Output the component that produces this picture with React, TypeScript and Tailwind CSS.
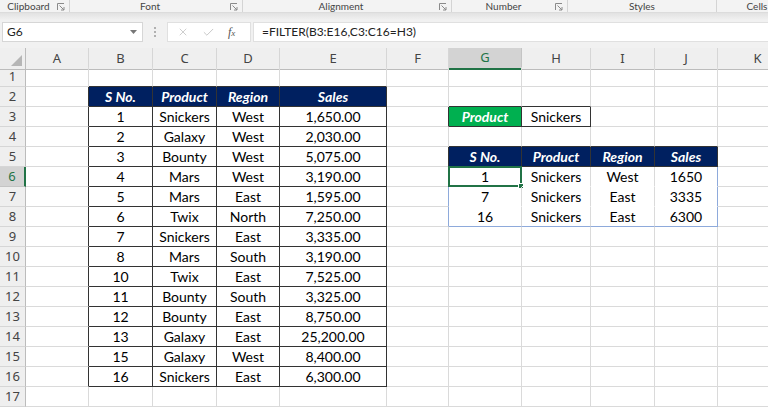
import React from 'react'
import { X, Check } from 'lucide-react'

type Edge = 'grid' | 'dark' | 'blue' | 'none'

const RIGHT: Record<Edge, string> = {
  grid: 'border-r-[#dadada]',
  dark: 'border-r-[#333333]',
  blue: 'border-r-[#8eaadb]',
  none: 'border-r-white',
}
const BOTTOM: Record<Edge, string> = {
  grid: 'border-b-[#dadada]',
  dark: 'border-b-[#333333]',
  blue: 'border-b-[#8eaadb]',
  none: 'border-b-white',
}

const COLS = ['A', 'B', 'C', 'D', 'E', 'F', 'G', 'H', 'I', 'J', 'K']
const TEMPLATE = 'grid grid-cols-[26px_63px_64px_64px_63px_107px_62px_73px_69px_64px_63px_80px]'

const HEAD = ['S No.', 'Product', 'Region', 'Sales']
const SALES = [
  ['1', 'Snickers', 'West', '1,650.00'],
  ['2', 'Galaxy', 'West', '2,030.00'],
  ['3', 'Bounty', 'West', '5,075.00'],
  ['4', 'Mars', 'West', '3,190.00'],
  ['5', 'Mars', 'East', '1,595.00'],
  ['6', 'Twix', 'North', '7,250.00'],
  ['7', 'Snickers', 'East', '3,335.00'],
  ['8', 'Mars', 'South', '3,190.00'],
  ['10', 'Twix', 'East', '7,525.00'],
  ['11', 'Bounty', 'South', '3,325.00'],
  ['12', 'Bounty', 'East', '8,750.00'],
  ['13', 'Galaxy', 'East', '25,200.00'],
  ['15', 'Galaxy', 'West', '8,400.00'],
  ['16', 'Snickers', 'East', '6,300.00'],
]
const FILTERED = [
  ['1', 'Snickers', 'West', '1650'],
  ['7', 'Snickers', 'East', '3335'],
  ['16', 'Snickers', 'East', '6300'],
]

function cellInfo(c: number, r: number) {
  let right: Edge = 'grid'
  let bottom: Edge = 'grid'
  let bg = ''
  let text = ''
  let head = false

  // source table B2:E16
  if (c >= 2 && c <= 5 && r >= 2 && r <= 16) {
    right = 'dark'
    bottom = 'dark'
    if (r === 2) {
      bg = 'bg-[#002060]'
      head = true
      text = HEAD[c - 2]
    } else {
      text = SALES[r - 3][c - 2]
    }
  }
  if (c === 1 && r >= 2 && r <= 16) right = 'dark'
  if (r === 1 && c >= 2 && c <= 5) bottom = 'dark'

  // criteria G3:H3
  if (r === 2 && (c === 7 || c === 8)) bottom = 'dark'
  if (r === 3 && c === 6) right = 'dark'
  if (r === 3 && c === 7) {
    right = 'dark'
    bottom = 'dark'
    bg = 'bg-[#00b050]'
    head = true
    text = 'Product'
  }
  if (r === 3 && c === 8) {
    right = 'dark'
    bottom = 'dark'
    text = 'Snickers'
  }

  // result header G5:J5
  if (r === 4 && c >= 7 && c <= 10) bottom = 'dark'
  if (r === 5 && c === 6) right = 'dark'
  if (r === 5 && c >= 7 && c <= 10) {
    right = 'dark'
    bottom = 'dark'
    bg = 'bg-[#002060]'
    head = true
    text = HEAD[c - 7]
  }

  // spill range G6:J8
  if (r >= 6 && r <= 8 && c === 6) right = 'blue'
  if (r >= 6 && r <= 8 && c >= 7 && c <= 10) {
    right = c === 10 ? 'blue' : 'grid'
    bottom = r === 8 ? 'blue' : 'none'
    text = FILTERED[r - 6][c - 7]
  }

  return { right, bottom, bg, text, head }
}

function Launcher() {
  return (
    <svg width="8" height="8" viewBox="0 0 8 8" className="shrink-0">
      <path d="M0.5 7V0.5H7" fill="none" stroke="#8a8a8a" strokeWidth="1" />
      <path d="M2.5 2.5L7 7M7 4V7H4" fill="none" stroke="#8a8a8a" strokeWidth="1" />
    </svg>
  )
}

function RibbonGroup({ label, width, launcher = true }: { label: string; width: string; launcher?: boolean }) {
  return (
    <div className={`${width} h-full shrink-0 flex items-center border-r border-r-[#d4d4d4]`}>
      <span className="flex-1 text-center">{label}</span>
      {launcher && (
        <span className="mr-[4px] mt-[1px]">
          <Launcher />
        </span>
      )}
    </div>
  )
}

function TopChrome() {
  return (
    <div className="h-[48px] bg-[#f1f1f1]">
      <div className="h-[13px] flex bg-[#f3f3f3] border-b border-b-[#dcdcdc] text-[10px] text-[#444] font-['Lato',sans-serif] leading-none">
        <RibbonGroup label="Clipboard" width="w-[70px]" />
        <RibbonGroup label="Font" width="w-[173px]" />
        <RibbonGroup label="Alignment" width="w-[209px]" />
        <RibbonGroup label="Number" width="w-[116px]" />
        <RibbonGroup label="Styles" width="w-[149px]" launcher={false} />
        <div className="w-[80px] shrink-0 h-full flex items-center justify-center">Cells</div>
      </div>
      <div className="h-[7px] bg-gradient-to-b from-[#e2e2e2] to-[#f1f1f1]" />
      <div className="flex items-start pt-[2px] font-['Lato',sans-serif] text-[12px] text-[#222]">
        <div className="ml-[2px] w-[141px] h-[20px] bg-white border border-[#d6d6d6] flex items-center pl-[4px] pr-[5px] justify-between">
          <span>G6</span>
          <svg width="7" height="4" viewBox="0 0 7 4">
            <path d="M0 0H7L3.5 4Z" fill="#777" />
          </svg>
        </div>
        <div className="w-[24px] h-[20px] flex flex-col items-center justify-center gap-[2px]">
          <span className="w-[2px] h-[2px] bg-[#b0b0b0]" />
          <span className="w-[2px] h-[2px] bg-[#b0b0b0]" />
          <span className="w-[2px] h-[2px] bg-[#b0b0b0]" />
        </div>
        <div className="w-[84px] h-[20px] bg-white border border-[#e0e0e0] flex items-center pl-[9px] gap-[13px]">
          <X size={12} color="#bdbdbd" strokeWidth={1.5} />
          <Check size={13} color="#bdbdbd" strokeWidth={1.5} />
          <span className="font-['Liberation_Serif',serif] italic text-[12px] text-[#555]">
            f<span className="text-[9px]">x</span>
          </span>
        </div>
        <div className="ml-[2px] flex-1 h-[20px] bg-white border border-[#e0e0e0] border-r-0 flex items-center pl-[8px]">
          =FILTER(B3:E16,C3:C16=H3)
        </div>
      </div>
    </div>
  )
}

function ColumnHeaders() {
  return (
    <div className={`${TEMPLATE} h-[19px] font-['Noto_Sans',sans-serif] text-[13px] text-[#444]`}>
      <div className="relative bg-[#efefef] border-r border-b border-r-[#bcbcbc] border-b-[#bcbcbc]">
        <svg width="11" height="11" viewBox="0 0 11 11" className="absolute right-[3px] bottom-[3px]">
          <path d="M11 0V11H0Z" fill="#b6b6b6" />
        </svg>
      </div>
      {COLS.map((c) =>
        c === 'G' ? (
          <div
            key={c}
            className="bg-[#d3d3d3] text-[#217346] border-r border-r-[#c4c4c4] border-b-2 border-b-[#217346] flex items-center justify-center"
          >
            {c}
          </div>
        ) : (
          <div
            key={c}
            className="bg-[#efefef] border-r border-b border-r-[#d6d6d6] border-b-[#bcbcbc] flex items-center justify-center"
          >
            {c}
          </div>
        )
      )}
    </div>
  )
}

function Sheet() {
  const rows = Array.from({ length: 17 }, (_, i) => i + 1)
  return (
    <div className={`${TEMPLATE} auto-rows-[20px]`}>
      {rows.map((r) => (
        <React.Fragment key={r}>
          {r === 6 ? (
            <div className="bg-[#d3d3d3] text-[#217346] border-r-2 border-b border-r-[#217346] border-b-[#c4c4c4] flex items-center justify-center font-['Noto_Sans',sans-serif] text-[13px]">
              {r}
            </div>
          ) : (
            <div className="bg-[#efefef] text-[#444] border-r border-b border-r-[#bcbcbc] border-b-[#d6d6d6] flex items-center justify-center font-['Noto_Sans',sans-serif] text-[13px]">
              {r}
            </div>
          )}
          {COLS.map((_, i) => {
            const c = i + 1
            const info = cellInfo(c, r)
            const active = c === 7 && r === 6
            return (
              <div
                key={c}
                className={`relative border-r border-b flex items-center justify-center whitespace-nowrap font-['Lato',sans-serif] text-[14px] ${RIGHT[info.right]} ${BOTTOM[info.bottom]} ${info.bg} ${
                  info.head ? 'text-white font-bold italic' : 'text-black'
                }`}
              >
                {info.text}
                {active && (
                  <div className="absolute -left-[1px] -top-[1px] -right-[1px] -bottom-[1px] border-2 border-[#217346]">
                    <div className="absolute -right-[4px] -bottom-[4px] w-[6px] h-[6px] bg-[#217346] border border-white" />
                  </div>
                )}
              </div>
            )
          })}
        </React.Fragment>
      ))}
    </div>
  )
}

export default function App() {
  return (
    <div className="w-[768px] h-[410px] overflow-hidden bg-white">
      <TopChrome />
      <ColumnHeaders />
      <Sheet />
    </div>
  )
}
